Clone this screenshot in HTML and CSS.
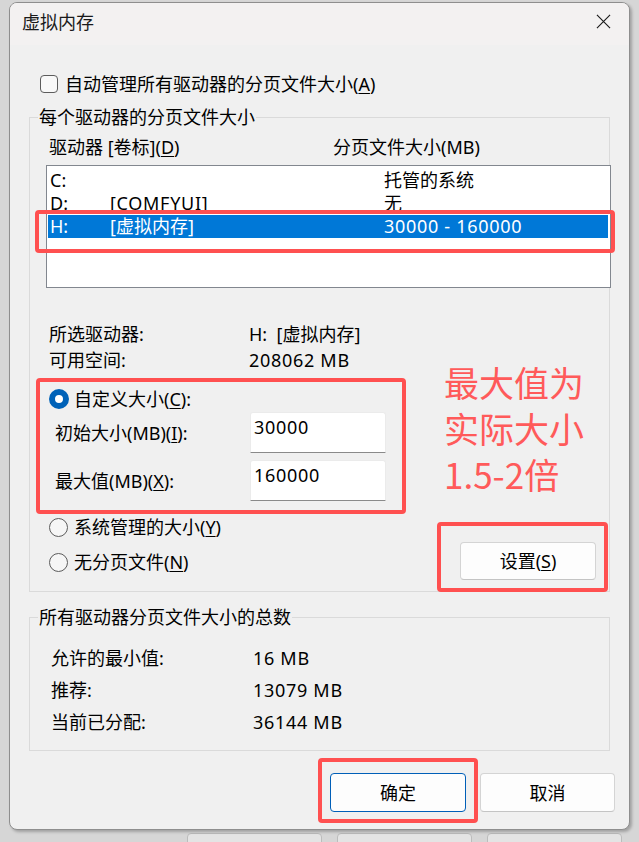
FILE: index.html
```html
<!DOCTYPE html>
<html lang="zh-CN">
<head>
<meta charset="utf-8">
<title>虚拟内存</title>
<link rel="stylesheet" href="styles.css">
</head>
<body>
<div class="dialog">
  <div class="titlebar">
    <span class="title">虚拟内存</span>
    <svg class="close" width="16" height="16" viewBox="0 0 16 16"><path d="M1 1 L15 15 M15 1 L1 15" stroke="#1a1a1a" stroke-width="1.2" fill="none"/></svg>
  </div>
  <div class="content">
    <div class="check-row"><span class="checkbox"></span><span>自动管理所有驱动器的分页文件大小(<u>A</u>)</span></div>

    <div class="group g1">
      <div class="group-title">每个驱动器的分页文件大小</div>
      <div class="list-head"><span class="hd1">驱动器 [卷标](<u>D</u>)</span><span>分页文件大小(MB)</span></div>
      <div class="listbox">
        <div class="row"><span class="c1">C:</span><span class="c2"></span><span>托管的系统</span></div>
        <div class="row"><span class="c1">D:</span><span class="c2 n">[COMFYUI]</span><span>无</span></div>
        <div class="row sel"><span class="c1">H:</span><span class="c2">[虚拟内存]</span><span class="n">30000 - 160000</span></div>
      </div>
      <div class="info">
        <span>所选驱动器:</span><span>H:&nbsp; [虚拟内存]</span>
        <span>可用空间:</span><span class="n">208062 MB</span>
      </div>
      <div class="radio-row custom"><span class="radio on"></span><span>自定义大小(<u>C</u>):</span></div>
      <div class="field"><span class="flabel">初始大小(MB)(<u>I</u>):</span><div class="input n">30000</div></div>
      <div class="field f2"><span class="flabel">最大值(MB)(<u>X</u>):</span><div class="input n">160000</div></div>
      <div class="bottom-row">
        <div class="radios">
          <div class="radio-row"><span class="radio"></span><span>系统管理的大小(<u>Y</u>)</span></div>
          <div class="radio-row r2"><span class="radio"></span><span>无分页文件(<u>N</u>)</span></div>
        </div>
        <div class="btn set">设置(<u>S</u>)</div>
      </div>
    </div>

    <div class="group g2">
      <div class="group-title">所有驱动器分页文件大小的总数</div>
      <div class="totals">
        <span>允许的最小值:</span><span class="n">16 MB</span>
        <span>推荐:</span><span class="n">13079 MB</span>
        <span>当前已分配:</span><span class="n">36144 MB</span>
      </div>
    </div>

    <div class="actions">
      <div class="btn ok">确定</div>
      <div class="btn">取消</div>
    </div>
  </div>

  <div class="mark m1"></div>
  <div class="mark m2"></div>
  <div class="mark m3"></div>
  <div class="mark m4"></div>
  <div class="note">最大值为<br>实际大小<br>1.5-2倍</div>
</div>
<div class="behind"><span></span><span></span><span></span></div>
</body>
</html>
```
FILE: styles.css
```css
* { box-sizing: border-box; }
html, body { margin: 0; padding: 0; }
body {
  width: 639px;
  height: 842px;
  overflow: hidden;
  background: #d6d6d6;
  font-family: "Noto Sans", "Noto Sans CJK SC", sans-serif;
  font-size: 18px;
  line-height: 24px;
  color: #000;
  padding: 2px 0 0 9px;
}
u { text-decoration: underline; text-underline-offset: 2px; text-decoration-thickness: 1px; }
.n { letter-spacing: 0.7px; }

.dialog {
  position: relative;
  width: 621px;
  height: 828px;
  background: #f0f0f0;
  border: 1px solid #8e8e8e;
  border-radius: 8px;
  box-shadow: 2px 2px 3px rgba(0,0,0,0.25);
  overflow: hidden;
}
.titlebar {
  height: 42px;
  background: #f3f1f1;
  display: flex;
  justify-content: space-between;
  align-items: flex-start;
  padding: 7px 18px 0 12px;
}
.title { font-size: 18px; color: #1a1a1a; }
.close { margin-top: 4px; width: 15px; height: 15px; }

.content { padding: 27px 19px 0 19px; }

.check-row { display: flex; align-items: center; height: 24px; margin-left: 11px; gap: 7px; }
.checkbox {
  width: 18px; height: 18px;
  border: 1px solid #5c5c5c;
  border-radius: 4px;
  background: #f8f8f8;
}

.group { border: 1px solid #dadada; }
.group-title {
  margin: -13px 0 0 8px;
  width: fit-content;
  padding: 0 1px;
  background: #f0f0f0;
  line-height: 24px;
}
.g1 { margin-top: 21px; padding-bottom: 11px; }

.list-head { display: flex; margin-top: 6px; padding-left: 19px; height: 24px; }
.hd1 { width: 284px; }

.listbox {
  margin: 6px -2px 0 16px;
  height: 123px;
  background: #fff;
  border: 1px solid #82878f;
  padding: 3px 1px 0 1px;
}
.row { display: flex; height: 23px; line-height: 23px; padding-left: 2px; margin-right: 1px; }
.row.sel { background: #0078d7; color: #fff; }
.c1 { width: 60px; }
.c2 { width: 274px; }

.info {
  display: grid;
  grid-template-columns: 200px auto;
  grid-auto-rows: 26px;
  line-height: 26px;
  margin-top: 33px;
  padding-left: 19px;
}

.radio-row { display: flex; align-items: center; height: 24px; padding-left: 19px; gap: 6px; }
.custom { margin-top: 14px; gap: 5px; }
.radio {
  width: 19px; height: 19px;
  border-radius: 50%;
  border: 1px solid #5c5c5c;
  background: #f6f6f6;
}
.radio.on {
  width: 20px; height: 20px;
  border: 6px solid #0062b8;
  background: #fff;
}

.field { display: flex; align-items: center; height: 41px; margin-top: 1px; padding-left: 25px; }
.f2 { margin-top: 7px; }
.flabel { width: 195px; }
.input {
  align-self: stretch;
  width: 136px;
  background: #fff;
  border: 1px solid #ebebeb;
  border-bottom: 1px solid #8a8a8a;
  border-radius: 3px 3px 0 0;
  padding: 2px 0 0 3px;
}

.bottom-row { display: flex; justify-content: space-between; align-items: flex-start; margin-top: 14px; padding-right: 13px; }
.r2 { margin-top: 11px; }

.btn {
  display: flex; align-items: center; justify-content: center;
  background: #fdfdfd;
  border: 1px solid #d4d4d4;
  border-bottom-color: #c4c4c4;
  border-radius: 4px;
}
.set { width: 136px; height: 38px; margin-top: 27px; }

.g2 { margin-top: 25px; padding-bottom: 12px; }
.totals {
  display: grid;
  grid-template-columns: 202px auto;
  grid-auto-rows: 32px;
  line-height: 32px;
  margin-top: 13px;
  padding-left: 21px;
}

.actions { display: flex; justify-content: flex-end; gap: 14px; margin: 22px -5px 0 0; }
.actions .btn { width: 135px; height: 39px; }
.actions .ok { width: 136px; border-color: #005fb8; }

.mark {
  position: absolute;
  border: 4px solid #ff5050;
  border-radius: 4px;
}
.m1 { left: 25px; top: 207px; width: 580px; height: 43px; }
.m2 { left: 26px; top: 375px; width: 370px; height: 136px; }
.m3 { left: 427px; top: 519px; width: 171px; height: 70px; }
.m4 { left: 308px; top: 755px; width: 160px; height: 65px; }

.note {
  position: absolute;
  left: 434px;
  top: 356px;
  font-family: "Noto Sans CJK SC", sans-serif;
  font-size: 35px;
  line-height: 46px;
  color: #ff5a5a;
}

.behind { display: flex; gap: 15px; margin: 3px 0 0 178px; }
.behind span {
  width: 135px; height: 20px;
  background: #e4e4e4;
  border: 1px solid #bcbcbc;
  border-radius: 4px;
}
```
